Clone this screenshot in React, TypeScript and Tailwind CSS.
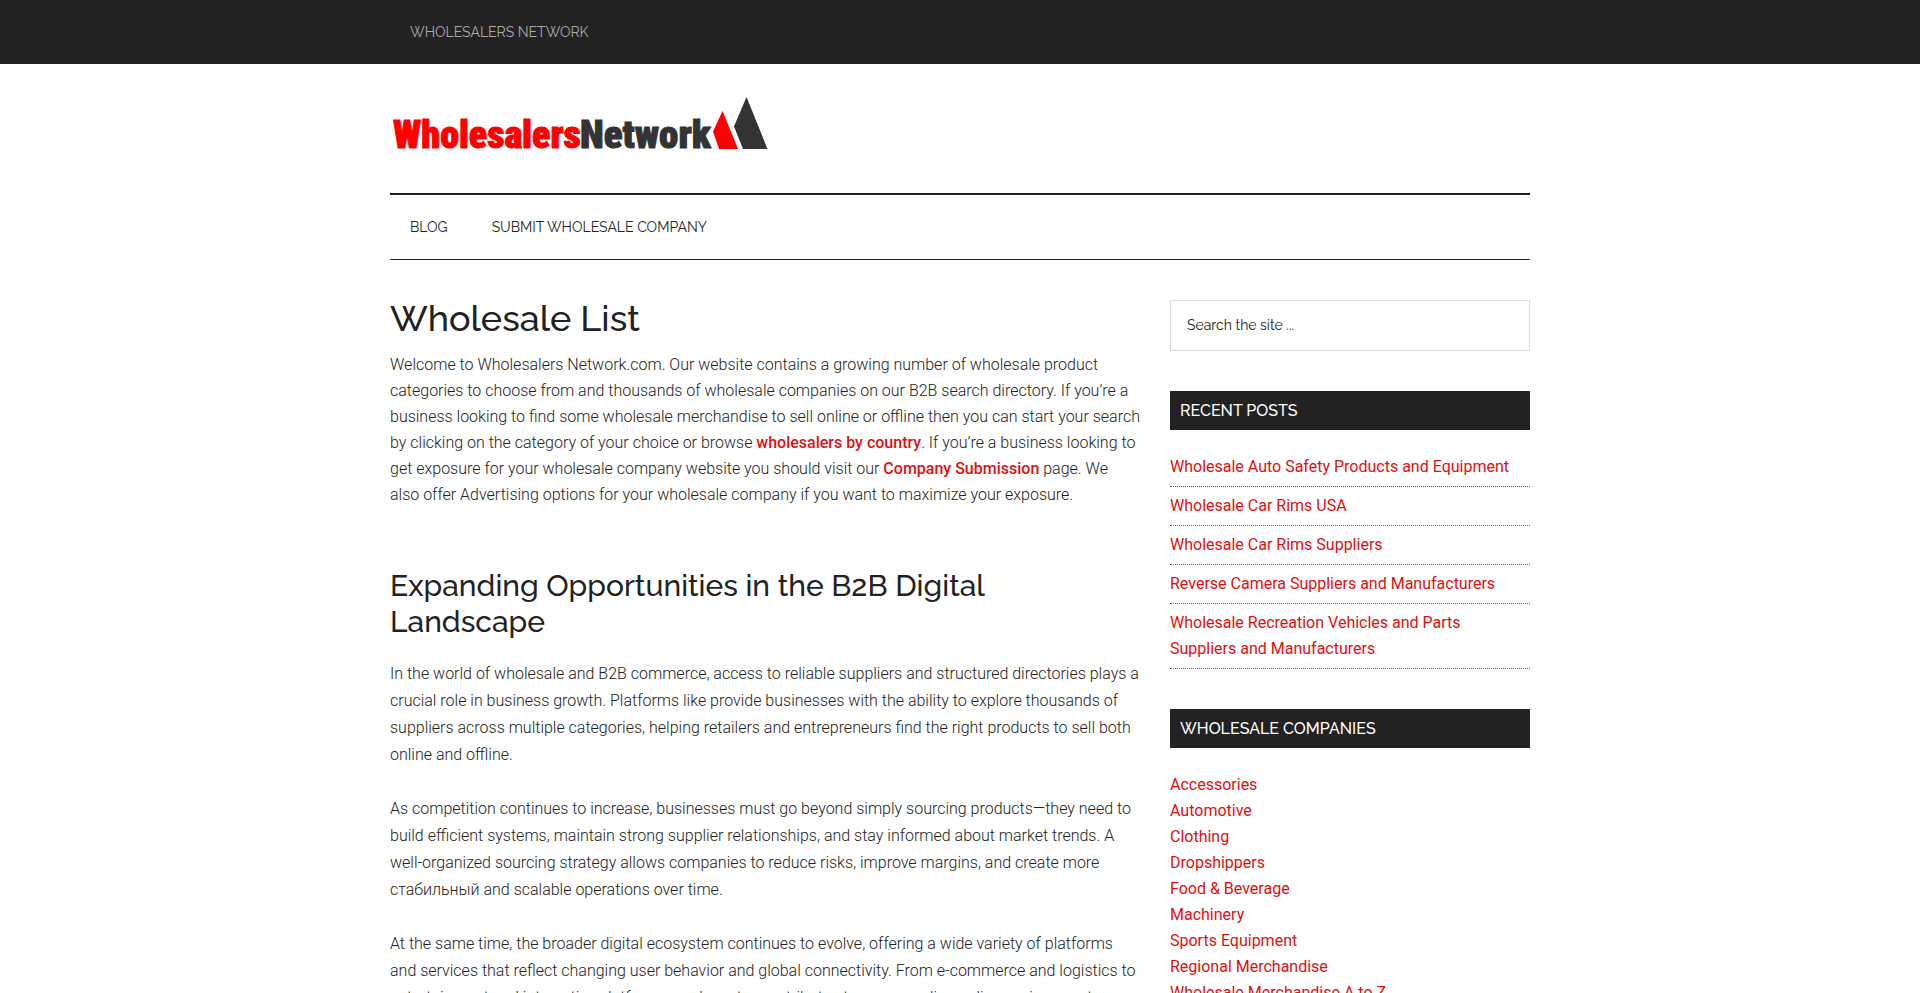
import React, { useState } from 'react';

const recentPosts = [
  'Wholesale Auto Safety Products and Equipment',
  'Wholesale Car Rims USA',
  'Wholesale Car Rims Suppliers',
  'Reverse Camera Suppliers and Manufacturers',
  'Wholesale Recreation Vehicles and Parts Suppliers and Manufacturers',
];

const companies = [
  'Accessories',
  'Automotive',
  'Clothing',
  'Dropshippers',
  'Food & Beverage',
  'Machinery',
  'Sports Equipment',
  'Regional Merchandise',
  'Wholesale Merchandise A to Z',
];

const Logo: React.FC = () => (
  <svg
    width="380"
    height="70"
    viewBox="0 0 380 70"
    role="img"
    aria-label="Wholesalers Network"
    className="font-['Roboto_Condensed',sans-serif] font-black"
  >
    <text x="3" y="52" fontSize="38" fill="#ff0000" stroke="#ff0000" strokeWidth="1">
      Wholesalers
    </text>
    <text x="190" y="52" fontSize="39" fill="#333333" stroke="#333333" strokeWidth="1">
      Network
    </text>
    <path d="M332.5 15 L348 53 H329 L323 35.5 Z" fill="#ff0000" />
    <path d="M356.5 1 L377.5 53 H353 L344 30.5 Z" fill="#333333" />
  </svg>
);

const WidgetTitle: React.FC<{ children: React.ReactNode }> = ({ children }) => (
  <h3 className="mb-6 bg-[#222222] px-[10px] py-2 font-['Raleway',sans-serif] text-base leading-[23px] font-medium text-white uppercase">
    {children}
  </h3>
);

const App: React.FC = () => {
  const [search, setSearch] = useState('');

  return (
    <div className="h-screen overflow-hidden bg-white font-['Roboto',sans-serif] text-base leading-[26px] font-light text-[#222222]">
      <div className="bg-[#222222]">
        <nav className="mx-auto flex h-16 max-w-[1140px] items-center px-5 font-['Raleway',sans-serif] text-sm font-normal text-[#aaaaaa] uppercase">
          <a href="#">Wholesalers Network</a>
        </nav>
      </div>

      <div className="mx-auto max-w-[1140px]">
        <header className="pt-8 pb-[27px]">
          <a href="#" className="block">
            <Logo />
          </a>
        </header>

        <nav className="flex h-[67px] items-center gap-11 border-t-2 border-b border-[#222222] px-5 font-['Raleway',sans-serif] text-sm font-normal uppercase">
          <a href="#">Blog</a>
          <a href="#">Submit Wholesale Company</a>
        </nav>

        <div className="flex gap-[30px] pt-10">
          <main className="min-w-0 flex-1">
            <h1 className="mb-4 font-['Raleway',sans-serif] text-4xl leading-9 font-medium">
              Wholesale List
            </h1>
            <p className="mb-[60px]">
              Welcome to Wholesalers Network.com. Our website contains a growing number of wholesale
              product categories to choose from and thousands of wholesale companies on our B2B search
              directory. If you’re a business looking to find some wholesale merchandise to sell online
              or offline then you can start your search by clicking on the category of your choice or
              browse{' '}
              <a href="#" className="font-medium text-[#dd1111]">
                wholesalers by country
              </a>
              . If you’re a business looking to get exposure for your wholesale company website you
              should visit our{' '}
              <a href="#" className="font-medium text-[#dd1111]">
                Company Submission
              </a>{' '}
              page. We also offer Advertising options for your wholesale company if you want to maximize
              your exposure.
            </p>

            <h2 className="mb-5 max-w-[640px] font-['Raleway',sans-serif] text-3xl leading-9 font-medium">
              Expanding Opportunities in the B2B Digital Landscape
            </h2>
            <div className="space-y-[27px] leading-[27px]">
              <p>
                In the world of wholesale and B2B commerce, access to reliable suppliers and structured
                directories plays a crucial role in business growth. Platforms like provide businesses
                with the ability to explore thousands of suppliers across multiple categories, helping
                retailers and entrepreneurs find the right products to sell both online and offline.
              </p>
              <p>
                As competition continues to increase, businesses must go beyond simply sourcing
                products—they need to build efficient systems, maintain strong supplier relationships,
                and stay informed about market trends. A well-organized sourcing strategy allows
                companies to reduce risks, improve margins, and create more стабильный and scalable
                operations over time.
              </p>
              <p>
                At the same time, the broader digital ecosystem continues to evolve, offering a wide
                variety of platforms and services that reflect changing user behavior and global
                connectivity. From e-commerce and logistics to entertainment and interactive platforms,
                each sector contributes to an expanding online environment.
              </p>
            </div>
          </main>

          <aside className="w-[360px] shrink-0">
            <form role="search" onSubmit={e => e.preventDefault()}>
              <input
                className="mb-10 block h-[51px] w-full border border-[#dddddd] px-4 pb-[2px] font-['Raleway',sans-serif] text-sm font-normal placeholder:text-[#222222]"
                type="search"
                name="search"
                aria-label="Search the site"
                placeholder="Search the site ..."
                value={search}
                onChange={e => setSearch(e.target.value)}
              />
            </form>

            <section className="mb-10">
              <WidgetTitle>Recent Posts</WidgetTitle>
              <ul className="space-y-[6px] font-normal text-[#dd1111]">
                {recentPosts.map(post => (
                  <li key={post} className="border-b border-dotted border-[#666666] pb-[6px]">
                    <a href="#">{post}</a>
                  </li>
                ))}
              </ul>
            </section>

            <section>
              <WidgetTitle>Wholesale Companies</WidgetTitle>
              <ul className="font-normal text-[#dd1111]">
                {companies.map(company => (
                  <li key={company}>
                    <a href="#">{company}</a>
                  </li>
                ))}
              </ul>
            </section>
          </aside>
        </div>
      </div>
    </div>
  );
};

export default App;
